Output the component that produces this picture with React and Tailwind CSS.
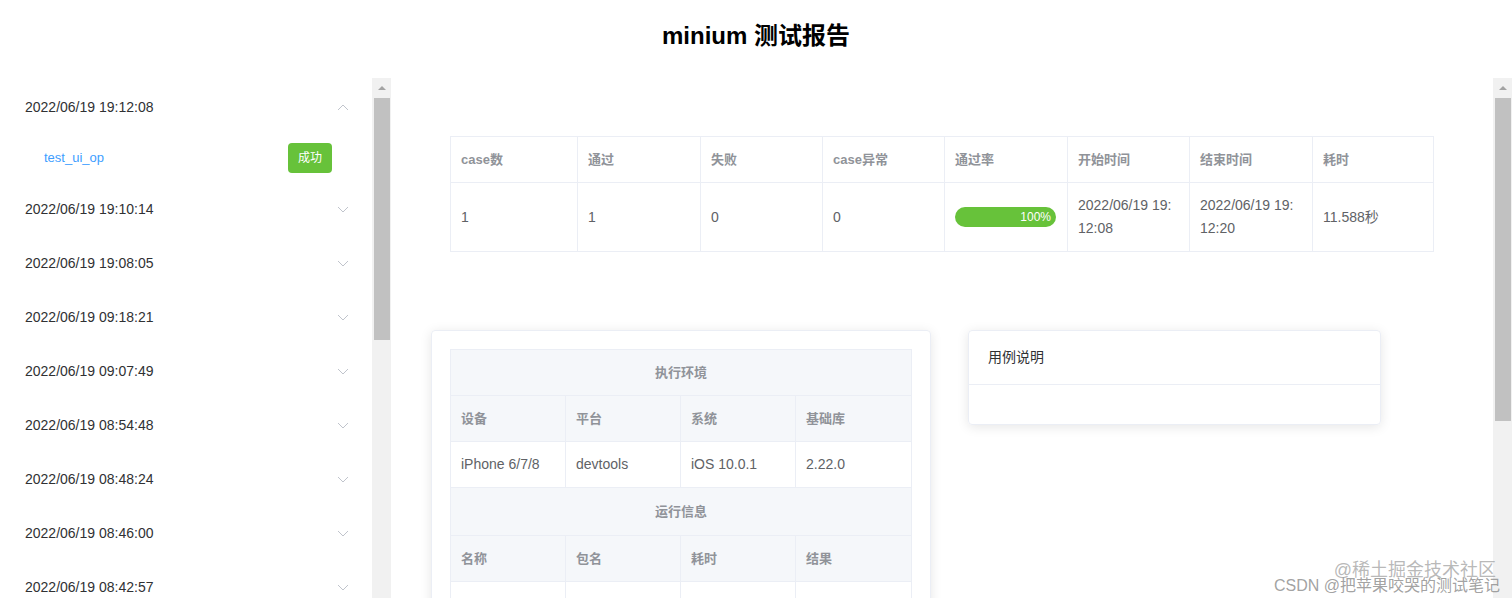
import React from "react";

const runs = [
  "2022/06/19 19:12:08",
  "2022/06/19 19:10:14",
  "2022/06/19 19:08:05",
  "2022/06/19 09:18:21",
  "2022/06/19 09:07:49",
  "2022/06/19 08:54:48",
  "2022/06/19 08:48:24",
  "2022/06/19 08:46:00",
  "2022/06/19 08:42:57",
];

const summaryHead = ["case数", "通过", "失败", "case异常", "通过率", "开始时间", "结束时间", "耗时"];

const Chevron = ({ up }) => (
  <svg width="12" height="7" viewBox="0 0 12 7" className={up ? "rotate-180" : ""}>
    <polyline points="1,1 6,6 11,1" fill="none" stroke="#c0c4cc" strokeWidth="1" />
  </svg>
);

const Scrollbar = ({ thumbHeight }) => (
  <div className="w-full h-full bg-[#f1f1f1] flex flex-col items-center">
    <div className="h-[20px] w-full flex items-center justify-center">
      <div className="w-0 h-0 border-l-[4px] border-r-[4px] border-b-[4px] border-l-transparent border-r-transparent border-b-[#a3a3a3]" />
    </div>
    <div className="w-[16px] bg-[#c1c1c1]" style={{ height: thumbHeight }} />
  </div>
);

const Cell = ({ children, head, className = "" }) => (
  <div
    className={`px-[10px] flex items-center border-r border-[#ebeef5] last:border-r-0 ${
      head ? "font-bold text-[#909399] text-[13px]" : "text-[#606266] text-[14px]"
    } ${className}`}
  >
    {children}
  </div>
);

const App = () => {
  return (
    <div
      className="relative w-[1512px] h-[598px] overflow-hidden bg-white flex flex-col"
      style={{ fontFamily: '"Liberation Sans", "Noto Sans CJK SC", sans-serif' }}
    >
      <div className="h-[78px] flex items-center justify-center pb-[6px]">
        <h1 className="text-[24px] font-bold text-black">minium 测试报告</h1>
      </div>

      <div className="flex flex-1 min-h-0">
        {/* left run list */}
        <div className="w-[370px] pt-[2px] flex flex-col overflow-hidden">
          {runs.map((r, i) => (
            <div key={r}>
              <div className="h-[54px] flex items-center justify-between pl-[25px] pr-[21px] text-[14px] text-[#303133]">
                <span>{r}</span>
                <Chevron up={i === 0} />
              </div>
              {i === 0 && (
                <div className="h-[48px] flex items-center justify-between pl-[44px] pr-[38px]">
                  <span className="text-[13px] text-[#409eff]">test_ui_op</span>
                  <span className="w-[44px] h-[30px] rounded-[4px] bg-[#67c23a] text-white text-[12px] flex items-center justify-center">
                    成功
                  </span>
                </div>
              )}
            </div>
          ))}
        </div>
        <div className="w-[21px] pl-[2px]">
          <Scrollbar thumbHeight={242} />
        </div>

        {/* main */}
        <div className="flex-1 flex flex-col overflow-hidden">
          <div className="mt-[58px] mx-[59px] border border-[#ebeef5]">
            <div className="grid grid-cols-[127px_123px_122px_122px_123px_122px_123px_1fr] h-[46px] border-b border-[#ebeef5]">
              {summaryHead.map((h) => (
                <Cell key={h} head>
                  {h}
                </Cell>
              ))}
            </div>
            <div className="grid grid-cols-[127px_123px_122px_122px_123px_122px_123px_1fr] h-[68px] leading-[23px]">
              <Cell>1</Cell>
              <Cell>1</Cell>
              <Cell>0</Cell>
              <Cell>0</Cell>
              <Cell>
                <div className="w-[101px] h-[20px] rounded-full bg-[#67c23a] flex items-center justify-end pr-[5px] text-white text-[12px]">
                  100%
                </div>
              </Cell>
              <Cell className="break-all pr-[14px]">2022/06/19 19:12:08</Cell>
              <Cell className="break-all pr-[14px]">2022/06/19 19:12:20</Cell>
              <Cell>11.588秒</Cell>
            </div>
          </div>

          <div className="mt-[78px] pl-[40px] flex items-start gap-[37px]">
            <div className="w-[500px] rounded-[4px] border border-[#ebeef5] shadow-[0_2px_12px_0_rgba(0,0,0,0.1)] p-[18px] pb-0">
              <div className="border border-[#ebeef5] text-[14px]">
                <div className="h-[46px] bg-[#f5f7fa] flex items-center justify-center font-bold text-[#909399] text-[13px] border-b border-[#ebeef5]">
                  执行环境
                </div>
                <div className="grid grid-cols-4 h-[46px] bg-[#f5f7fa] border-b border-[#ebeef5]">
                  {["设备", "平台", "系统", "基础库"].map((h) => (
                    <Cell key={h} head>
                      {h}
                    </Cell>
                  ))}
                </div>
                <div className="grid grid-cols-4 h-[46px] border-b border-[#ebeef5]">
                  <Cell>iPhone 6/7/8</Cell>
                  <Cell>devtools</Cell>
                  <Cell>iOS 10.0.1</Cell>
                  <Cell>2.22.0</Cell>
                </div>
                <div className="h-[48px] bg-[#f5f7fa] flex items-center justify-center font-bold text-[#909399] text-[13px] border-b border-[#ebeef5]">
                  运行信息
                </div>
                <div className="grid grid-cols-4 h-[46px] bg-[#f5f7fa] border-b border-[#ebeef5]">
                  {["名称", "包名", "耗时", "结果"].map((h) => (
                    <Cell key={h} head>
                      {h}
                    </Cell>
                  ))}
                </div>
                <div className="grid grid-cols-4 h-[46px]">
                  <Cell />
                  <Cell />
                  <Cell />
                  <Cell />
                </div>
              </div>
            </div>

            <div className="w-[413px] rounded-[4px] border border-[#ebeef5] shadow-[0_2px_12px_0_rgba(0,0,0,0.1)]">
              <div className="h-[54px] flex items-center px-[19px] text-[14px] text-[#303133] border-b border-[#ebeef5]">
                用例说明
              </div>
              <div className="h-[39px]" />
            </div>
          </div>
        </div>
        <div className="w-[19px]">
          <Scrollbar thumbHeight={323} />
        </div>
      </div>

      {/* watermark */}
      <div className="absolute right-[16px] bottom-[19px] text-[18px] text-[#9a9a9a]/70 leading-none">
        @稀土掘金技术社区
      </div>
      <div className="absolute right-[12px] bottom-[4px] text-[16px] text-[#8a8a8a]/80 leading-none">
        CSDN @把苹果咬哭的测试笔记
      </div>
    </div>
  );
};

export default App;
